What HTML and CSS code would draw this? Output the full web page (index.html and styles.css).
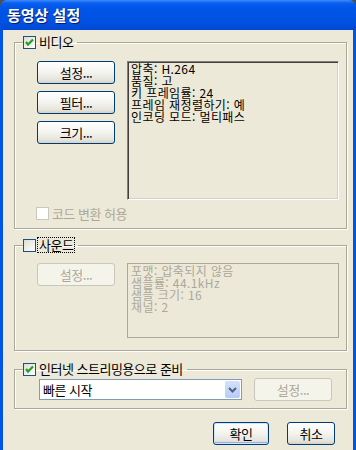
FILE: index.html
```html
<!DOCTYPE html>
<html lang="ko">
<head>
  <meta charset="UTF-8" />
  <title>동영상 설정</title>
  <link rel="stylesheet" href="styles.css">
</head>
<body>
  <div class="window">
    <div class="titlebar">동영상 설정</div>
    <div class="client">

      <fieldset class="group video">
        <legend>
          <span class="check on"><svg width="11" height="11" viewBox="0 0 11 11"><polyline points="2,5 4,7.5 9,2.5" /></svg></span>
          <span class="lbl">비디오</span>
        </legend>
        <div class="group-body">
          <div class="row">
            <div class="btn-col">
              <button class="btn">설정...</button>
              <button class="btn">필터...</button>
              <button class="btn">크기...</button>
            </div>
            <div class="info">
              압축: H.264<br>
              품질: 고<br>
              키 프레임률: 24<br>
              프레임 재정렬하기: 예<br>
              인코딩 모드: 멀티패스
            </div>
          </div>
          <div class="check-row disabled">
            <span class="check off"></span>
            <span class="lbl">코드 변환 허용</span>
          </div>
        </div>
      </fieldset>

      <fieldset class="group sound">
        <legend>
          <span class="check"></span>
          <span class="lbl focus">사운드</span>
        </legend>
        <div class="group-body">
          <div class="row">
            <div class="btn-col">
              <button class="btn" disabled>설정...</button>
            </div>
            <div class="info dim">
              포맷: 압축되지 않음<br>
              샘플률: 44.1kHz<br>
              샘플 크기: 16<br>
              채널: 2
            </div>
          </div>
        </div>
      </fieldset>

      <fieldset class="group stream">
        <legend>
          <span class="check on"><svg width="11" height="11" viewBox="0 0 11 11"><polyline points="2,5 4,7.5 9,2.5" /></svg></span>
          <span class="lbl">인터넷 스트리밍용으로 준비</span>
        </legend>
        <div class="group-body">
          <div class="row">
            <div class="combo">
              <span class="combo-text">빠른 시작</span>
              <span class="combo-arrow"><svg width="9" height="6" viewBox="0 0 9 6"><polyline points="1,1 4.5,4.5 8,1" /></svg></span>
            </div>
            <button class="btn" disabled>설정...</button>
          </div>
        </div>
      </fieldset>

      <div class="actions">
        <button class="btn default">확인</button>
        <button class="btn">취소</button>
      </div>
    </div>
  </div>
</body>
</html>
```

FILE: styles.css
```css
body {
  margin: 0;
  background: #4e4e4e;
  font-family: "Noto Sans CJK KR", "Noto Sans", sans-serif;
  font-size: 13px;
  letter-spacing: -0.5px;
  color: #000;
}
.window {
  width: 356px;
  height: 450px;
  display: flex;
  flex-direction: column;
  overflow: hidden;
}
.titlebar {
  height: 30px;
  box-sizing: border-box;
  padding: 4px 0 0 7px;
  border-radius: 7px 7px 0 0;
  background: linear-gradient(#3d8cf7 0px, #0a5ff3 3px, #0055e8 8px, #0052e0 22px, #0047d4 30px);
  color: #fff;
  font-size: 15px;
  font-weight: bold;
  letter-spacing: 0;
  line-height: 22px;
  text-shadow: 1px 1px 0 #0a1a80;
}
.client {
  flex: 1;
  background: #ece9d8;
  border-left: 3px solid #0055e5;
  border-right: 3px solid #0055e5;
  padding: 5px 6px 0 11px;
  display: flex;
  flex-direction: column;
}
.group {
  margin: 0;
  border: 1px solid #aca899;
  box-shadow: 1px 1px 0 #fff, inset 1px 1px 0 #fff;
  padding: 0;
}
.group legend {
  display: flex;
  align-items: center;
  height: 14px;
  padding: 0 4px 0 0;
  margin-left: 8px;
}
.lbl {
  line-height: 14px;
  margin-left: 3px;
}
.check {
  width: 11px;
  height: 11px;
  border: 1px solid #1c5180;
  background: linear-gradient(135deg, #dcdcd7, #fff);
  display: inline-flex;
}
.check svg polyline {
  fill: none;
  stroke: #21a121;
  stroke-width: 2.2;
}
.check.off {
  border-color: #cac8bb;
  background: #fff;
}
.focus {
  outline: 1px dotted #000;
  outline-offset: 0;
  padding: 0 1px;
  margin-left: 2px;
}
.group-body {
  padding-left: 22px;
}
.row {
  display: flex;
}
.btn-col {
  display: flex;
  flex-direction: column;
  gap: 7px;
}
.btn {
  width: 78px;
  height: 23px;
  border: 1px solid #003c74;
  border-radius: 3px;
  background: linear-gradient(#fff 0%, #f3f3ef 50%, #e5e4dc 85%, #d6d0c5 100%);
  font-family: inherit;
  font-size: 13px;
  letter-spacing: -0.5px;
  color: #000;
  padding: 0;
}
.btn:disabled {
  border-color: #c9c7ba;
  background: #f5f4ea;
  color: #aca899;
}
.info {
  margin-left: 12px;
  width: 212px;
  height: 139px;
  box-sizing: border-box;
  border: 1px solid;
  border-color: #808080 #fff #fff #808080;
  box-shadow: inset 1px 1px 0 #404040, inset -1px -1px 0 #d4d0c8;
  padding: 1px 0 0 3px;
  font-size: 12px;
  line-height: 12px;
  letter-spacing: 0.4px;
}
.info.dim {
  height: 75px;
  border: 1px solid #aca899;
  box-shadow: none;
  color: #aca899;
}
.video .group-body {
  padding-top: 12px;
  padding-bottom: 8px;
}
.check-row {
  display: flex;
  align-items: center;
  margin-top: 7px;
  margin-left: -1px;
  height: 13px;
}
.check-row.disabled .lbl {
  color: #aca899;
}
.sound {
  margin-top: 9px;
}
.sound .group-body {
  padding-top: 11px;
  padding-bottom: 12px;
}
.stream {
  margin-top: 11px;
}
.stream .group-body {
  padding: 2px 0 7px 24px;
}
.combo {
  width: 203px;
  height: 21px;
  box-sizing: border-box;
  border: 1px solid #7f9db9;
  background: #fff;
  display: flex;
  align-items: center;
  justify-content: space-between;
  margin-top: 1px;
}
.combo-text {
  padding-left: 3px;
}
.combo-arrow {
  width: 15px;
  height: 17px;
  margin-right: 1px;
  border-radius: 2px;
  background: linear-gradient(#d4e1fb, #b7cbf5);
  display: flex;
  align-items: center;
  justify-content: center;
}
.combo-arrow polyline {
  fill: none;
  stroke: #4d6185;
  stroke-width: 2;
}
.stream .btn {
  margin-left: 12px;
}
.actions {
  display: flex;
  justify-content: flex-end;
  gap: 18px;
  margin-top: 13px;
  padding-right: 12px;
}
.actions .btn {
  width: 56px;
  height: 23px;
}
.actions .btn:last-child {
  width: 48px;
}
.btn.default {
  box-shadow: inset 0 0 0 1px #cee7ff, inset 0 -1px 0 1px #97aee2;
}
```
